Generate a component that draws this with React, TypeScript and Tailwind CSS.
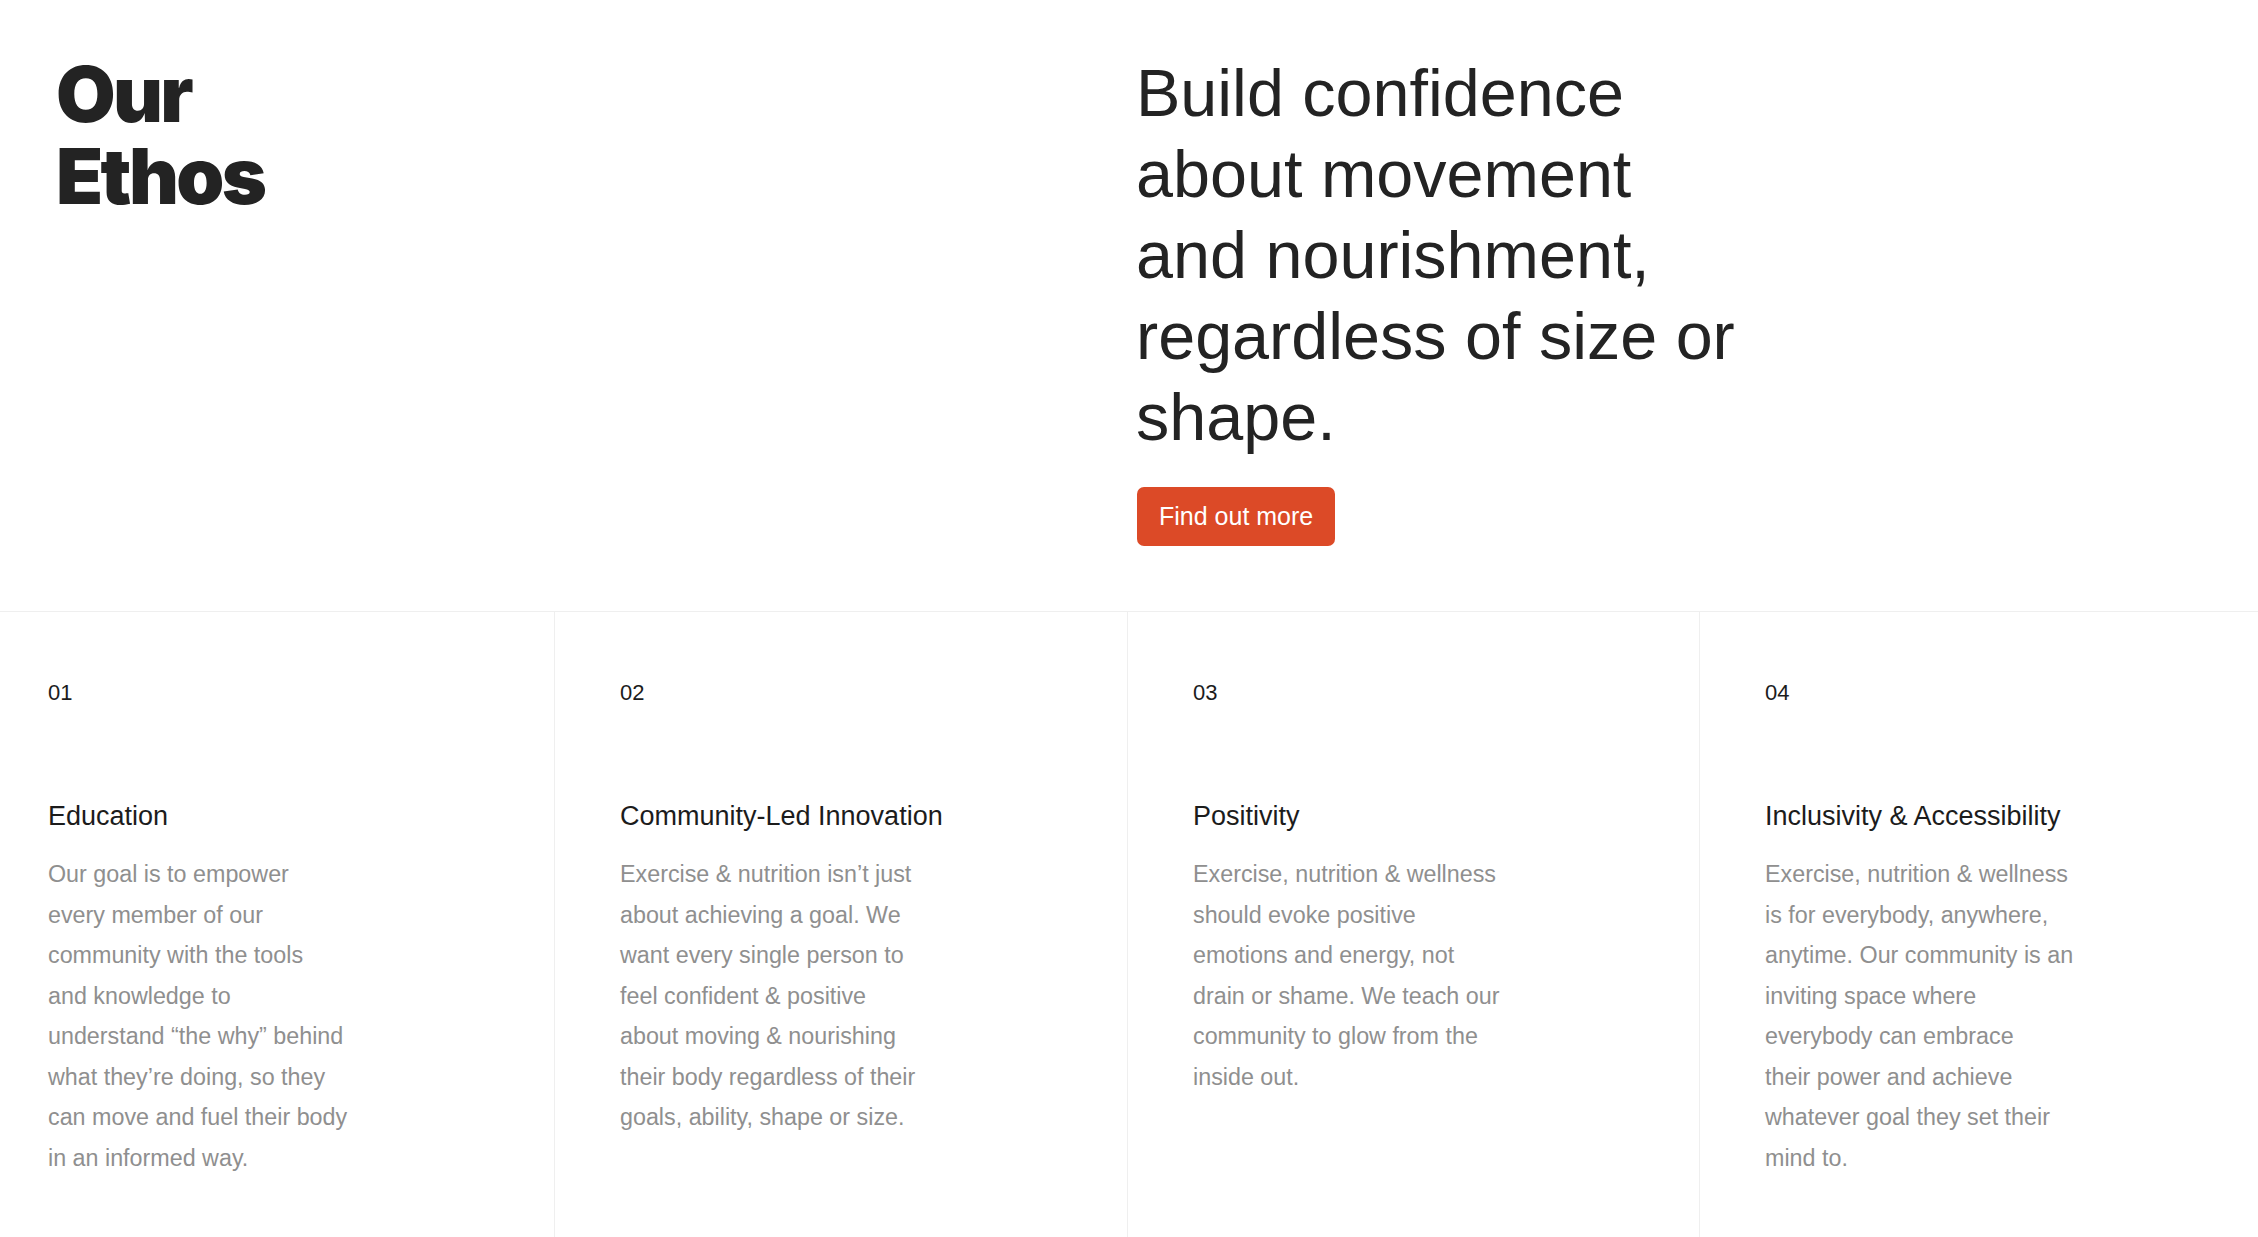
import React from "react";

type Pillar = { num: string; title: string; lines: string[] };

const PILLARS: Pillar[] = [
    {
        num: "01",
        title: "Education",
        lines: [
            "Our goal is to empower",
            "every member of our",
            "community with the tools",
            "and knowledge to",
            "understand \u201cthe why\u201d behind",
            "what they\u2019re doing, so they",
            "can move and fuel their body",
            "in an informed way.",
        ],
    },
    {
        num: "02",
        title: "Community-Led Innovation",
        lines: [
            "Exercise & nutrition isn\u2019t just",
            "about achieving a goal. We",
            "want every single person to",
            "feel confident & positive",
            "about moving & nourishing",
            "their body regardless of their",
            "goals, ability, shape or size.",
        ],
    },
    {
        num: "03",
        title: "Positivity",
        lines: [
            "Exercise, nutrition & wellness",
            "should evoke positive",
            "emotions and energy, not",
            "drain or shame. We teach our",
            "community to glow from the",
            "inside out.",
        ],
    },
    {
        num: "04",
        title: "Inclusivity & Accessibility",
        lines: [
            "Exercise, nutrition & wellness",
            "is for everybody, anywhere,",
            "anytime. Our community is an",
            "inviting space where",
            "everybody can embrace",
            "their power and achieve",
            "whatever goal they set their",
            "mind to.",
        ],
    },
];

const HEADLINE = ["Build confidence", "about movement", "and nourishment,", "regardless of size or", "shape."];

function PillarColumn({ p, first }: { p: Pillar; first: boolean }) {
    return (
        <div className={first ? "pl-[48px] pt-[68px] pb-[60px]" : "border-l border-[#efefef] pl-[65px] pt-[68px] pb-[60px]"}>
            <div className="text-[22px] leading-[26px] text-[#1c1c1c]">{p.num}</div>
            <h3 className="mt-[94px] text-[27px] leading-[32px] text-[#1c1c1c]">{p.title}</h3>
            <p className="mt-[22px] text-[23.3px] leading-[40.5px] text-[#8f8f8f]">
                {p.lines.map((l, i) => (
                    <span key={i} className="block whitespace-nowrap">{l}</span>
                ))}
            </p>
        </div>
    );
}

export default function App() {
    return (
        <div className="flex min-h-screen flex-col bg-white font-['Liberation_Sans',Arial,sans-serif]">
            <section className="flex border-b border-[#efefef] pt-[53px] pb-[65px]">
                <div className="w-[1136px] shrink-0 pl-[56px]">
                    <h2 className="font-['Inter',sans-serif] text-[77px] font-black leading-[82px] tracking-[-0.035em] text-[#232323]">
                        <span className="block">Our</span>
                        <span className="block">Ethos</span>
                    </h2>
                </div>
                <div className="flex-1">
                    <p className="text-[66.5px] leading-[81px] text-[#232323]">
                        {HEADLINE.map((l, i) => (
                            <span key={i} className="block whitespace-nowrap">{l}</span>
                        ))}
                    </p>
                    <button className="ml-[1px] mt-[29px] h-[59px] rounded-[7px] bg-[#dc4a27] px-[22px] text-[25px] text-white">
                        Find out more
                    </button>
                </div>
            </section>

            <div className="grid flex-1 grid-cols-[554px_573px_572px_1fr]">
                {PILLARS.map((p, i) => (
                    <PillarColumn key={p.num} p={p} first={i === 0} />
                ))}
            </div>
        </div>
    );
}
